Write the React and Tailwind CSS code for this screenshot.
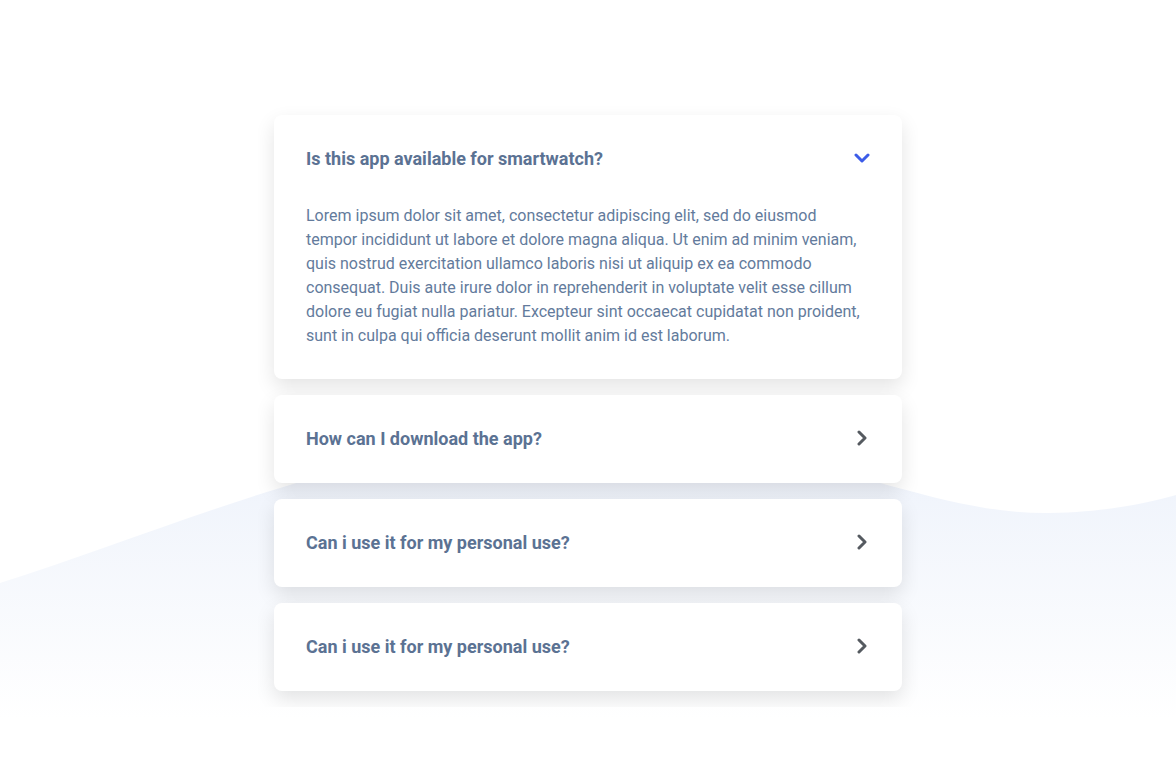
import { useState } from "react";

const faqs = [
  {
    q: "Is this app available for smartwatch?",
    a: "Lorem ipsum dolor sit amet, consectetur adipiscing elit, sed do eiusmod tempor incididunt ut labore et dolore magna aliqua. Ut enim ad minim veniam, quis nostrud exercitation ullamco laboris nisi ut aliquip ex ea commodo consequat. Duis aute irure dolor in reprehenderit in voluptate velit esse cillum dolore eu fugiat nulla pariatur. Excepteur sint occaecat cupidatat non proident, sunt in culpa qui officia deserunt mollit anim id est laborum.",
  },
  { q: "How can I download the app?", a: "Lorem ipsum dolor sit amet, consectetur adipiscing elit." },
  { q: "Can i use it for my personal use?", a: "Lorem ipsum dolor sit amet, consectetur adipiscing elit." },
  { q: "Can i use it for my personal use?", a: "Lorem ipsum dolor sit amet, consectetur adipiscing elit." },
];

// background wave, purely decorative
function Wave() {
  return (
    <svg className="absolute inset-0 h-[758px] w-full" viewBox="0 0 1176 758" preserveAspectRatio="none">
      <defs>
        <linearGradient id="waveFill" gradientUnits="userSpaceOnUse" x1="0" y1="440" x2="0" y2="720">
          <stop offset="0" stopColor="#edf2fb" />
          <stop offset="1" stopColor="#ffffff" />
        </linearGradient>
      </defs>
      <path
        d="M0,583 C200,520 450,400 700,440 C850,465 950,515 1050,513 C1110,512 1150,502 1176,495 L1176,758 L0,758 Z"
        fill="url(#waveFill)"
      />
    </svg>
  );
}

function Chevron({ open }) {
  if (open)
    return (
      <svg width="16" height="10" viewBox="0 0 16 10" fill="none">
        <path d="M2 2 L8 8 L14 2" stroke="#3c5ce8" strokeWidth="3" strokeLinecap="round" strokeLinejoin="round" />
      </svg>
    );
  return (
    <svg width="10" height="16" viewBox="0 0 10 16" fill="none">
      <path d="M2 2 L8 8 L2 14" stroke="#555a60" strokeWidth="3" strokeLinecap="round" strokeLinejoin="round" />
    </svg>
  );
}

export default function App() {
  const [openIdx, setOpenIdx] = useState(0);

  return (
    <div className="relative min-h-[758px] overflow-hidden bg-white" style={{ fontFamily: "Roboto, 'Liberation Sans', sans-serif" }}>
      <Wave />
      <div className="relative mx-auto mt-[99px] w-[660px] overflow-hidden p-4">
        <div className="flex flex-col gap-4">
          {faqs.map((item, i) => {
            const open = openIdx === i;
            return (
              <div key={i} className="rounded-lg bg-white shadow-[0_8px_20px_rgba(0,0,0,0.11)]">
                <button
                  className="flex h-[88px] w-full items-center justify-between px-8 pb-[2px] text-left"
                  onClick={() => setOpenIdx(open ? -1 : i)}
                >
                  <span className="text-[18px] font-bold text-[#5b7293]">{item.q}</span>
                  <span className="flex w-4 justify-center">
                    <Chevron open={open} />
                  </span>
                </button>
                {open && (
                  <p className="px-8 pt-px pb-[31px] text-[16px] leading-6 text-[#637b9c]">{item.a}</p>
                )}
              </div>
            );
          })}
        </div>
      </div>
    </div>
  );
}
